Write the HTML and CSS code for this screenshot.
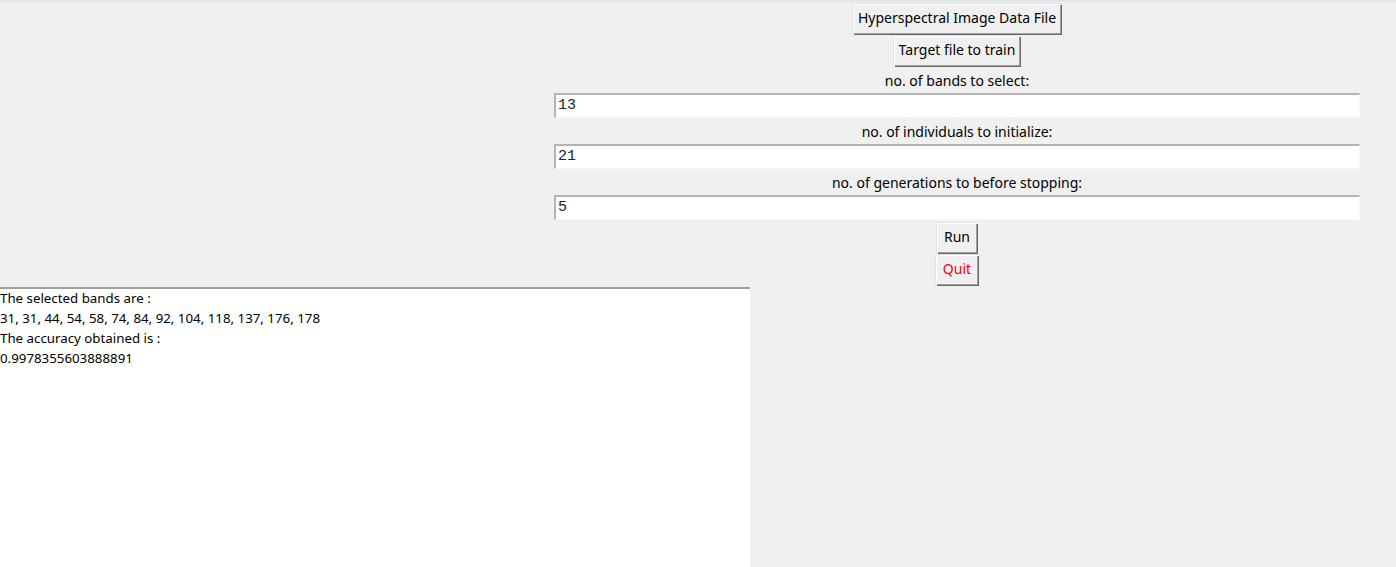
FILE: index.html
```html
<!DOCTYPE html>
<html>
<head>
<meta charset="utf-8">
<link rel="stylesheet" href="styles.css">
</head>
<body>
<div class="topline"></div>
<div class="controls">
  <button class="btn btn-data">Hyperspectral Image Data File</button>
  <button class="btn btn-target">Target file to train</button>
  <div class="label">no. of bands to select:</div>
  <div class="entry">13</div>
  <div class="label">no. of individuals to initialize:</div>
  <div class="entry">21</div>
  <div class="label">no. of generations to before stopping:</div>
  <div class="entry">5</div>
  <button class="btn btn-small btn-run">Run</button>
  <button class="btn btn-small btn-quit">Quit</button>
</div>
<div class="output">
  <div class="line">The selected bands are :</div>
  <div class="line">31, 31, 44, 54, 58, 74, 84, 92, 104, 118, 137, 176, 178</div>
  <div class="line">The accuracy obtained is :</div>
  <div class="line">0.9978355603888891</div>
</div>
</body>
</html>
```
FILE: styles.css
```css
html, body {
  margin: 0;
  padding: 0;
  background: #f0f0f0;
  height: 567px;
  overflow: hidden;
  font-family: "Noto Sans", "Open Sans", sans-serif;
  font-size: 14px;
  color: #000;
}
.topline {
  height: 2px;
  background: #dbe9ec;
}
.controls {
  margin-left: 554px;
  width: 806px;
  padding-top: 1px;
  display: flex;
  flex-direction: column;
  align-items: center;
}
.btn {
  font-family: inherit;
  font-size: 14px;
  color: #000;
  background: #f0f0f0;
  border: 0;
  margin: 0;
  height: 32px;
  padding: 0 6px 2px 6px;
  box-shadow: inset 1px 1px 0 #e3e3e3, inset 2px 2px 0 #ffffff,
              inset -1px -1px 0 #696969, inset -2px -2px 0 #a0a0a0;
  line-height: 28px;
}
.btn-small {
  padding-left: 8px;
  padding-right: 8px;
}
.btn-quit { color: #ff0000; }
.label {
  height: 26px;
  line-height: 27px;
  text-align: center;
}
.entry {
  align-self: stretch;
  height: 25px;
  box-sizing: border-box;
  background: #fff;
  border-top: 2px solid #b4b4b4;
  border-left: 2px solid #b4b4b4;
  border-right: 1px solid #f7f7f7;
  border-bottom: 1px solid #f7f7f7;
  font-family: "Liberation Mono", monospace;
  font-size: 15px;
  line-height: 22px;
  padding-left: 2px;
  color: #222;
}
.btn-run { margin-top: 2px; }
.output {
  margin-top: 1px;
  width: 750px;
  height: 300px;
  box-sizing: border-box;
  background: #fff;
  border-top: 2px solid #a0a0a0;
}
.line {
  height: 20px;
  line-height: 19px;
  font-size: 13.3px;
}
```
